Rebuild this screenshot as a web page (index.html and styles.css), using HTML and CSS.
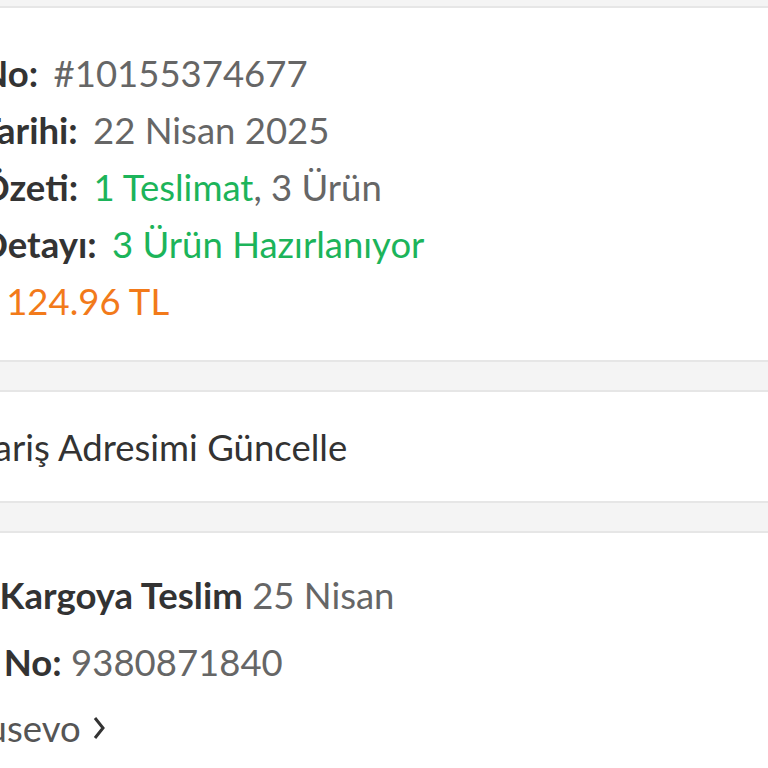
FILE: index.html
```html
<!DOCTYPE html>
<html lang="tr">

<head>
    <meta charset="UTF-8">
    <meta name="viewport" content="width=device-width, initial-scale=1.0">
    <link rel="stylesheet" href="styles.css">
    <title>Sipariş Detayı</title>
</head>

<body>
    <div class="gap top-gap"></div>

    <div class="card summary">
        <div class="row"><span class="label">Sipariş No:</span> <span class="value">#10155374677</span></div>
        <div class="row"><span class="label">Sipariş Tarihi:</span> <span class="value">22 Nisan 2025</span></div>
        <div class="row"><span class="label">Sipariş Özeti:</span> <span class="value"><span class="green">1 Teslimat</span>, 3 Ürün</span></div>
        <div class="row"><span class="label">Sipariş Detayı:</span> <span class="value green">3 Ürün Hazırlanıyor</span></div>
        <div class="row"><span class="label">Toplam:</span> <span class="value orange">124.96 TL</span></div>
    </div>

    <div class="gap"></div>

    <div class="card address">
        <div class="address-text">Sipariş Adresimi Güncelle</div>
    </div>

    <div class="gap"></div>

    <div class="card delivery">
        <div class="row"><span class="label">Tahmini Kargoya Teslim</span> <span class="value">25 Nisan</span></div>
        <div class="row"><span class="label">Gönderi No:</span> <span class="value">9380871840</span></div>
        <div class="row seller">Satıcı: usevo
            <svg class="chevron" width="12" height="24" viewBox="0 0 12 24">
                <path d="M2 2 L10 12 L2 22" fill="none" stroke="#333" stroke-width="3" />
            </svg>
        </div>
    </div>
</body>

</html>
```

FILE: styles.css
```css
body {
    font-family: 'Lato', sans-serif;
    background-color: #f4f4f4;
    margin: 0;
    padding: 0;
    overflow: hidden;
}

.gap {
    height: 28px;
    background-color: #f4f4f4;
}

.top-gap {
    height: 6px;
}

.card {
    background-color: #fff;
    border-top: 2px solid #e6e6e6;
    border-bottom: 2px solid #e6e6e6;
}

.summary {
    padding: 37px 0 30px 0;
}

.row {
    margin-left: -136px;
    font-size: 36.5px;
    line-height: 57px;
    white-space: nowrap;
    color: #333;
}

.label {
    font-weight: bold;
    color: #333;
    margin-right: 6px;
}

.value {
    color: #666;
}

.green {
    color: #1cb45a;
}

.orange {
    color: #f27a1a;
}

.address {
    height: 109px;
    display: flex;
    align-items: center;
}

.address-text {
    font-size: 36.5px;
    margin-left: -55px;
    color: #333;
    white-space: nowrap;
}

.delivery {
    padding: 29px 0 30px 0;
    border-bottom: none;
    min-height: 300px;
}

.delivery .row {
    line-height: 66.5px;
    margin-left: -136px;
}

.delivery .label {
    margin-right: 0;
}

.delivery .seller {
    margin-left: -118px;
    color: #555;
    display: flex;
    align-items: center;
    gap: 12px;
}
```
